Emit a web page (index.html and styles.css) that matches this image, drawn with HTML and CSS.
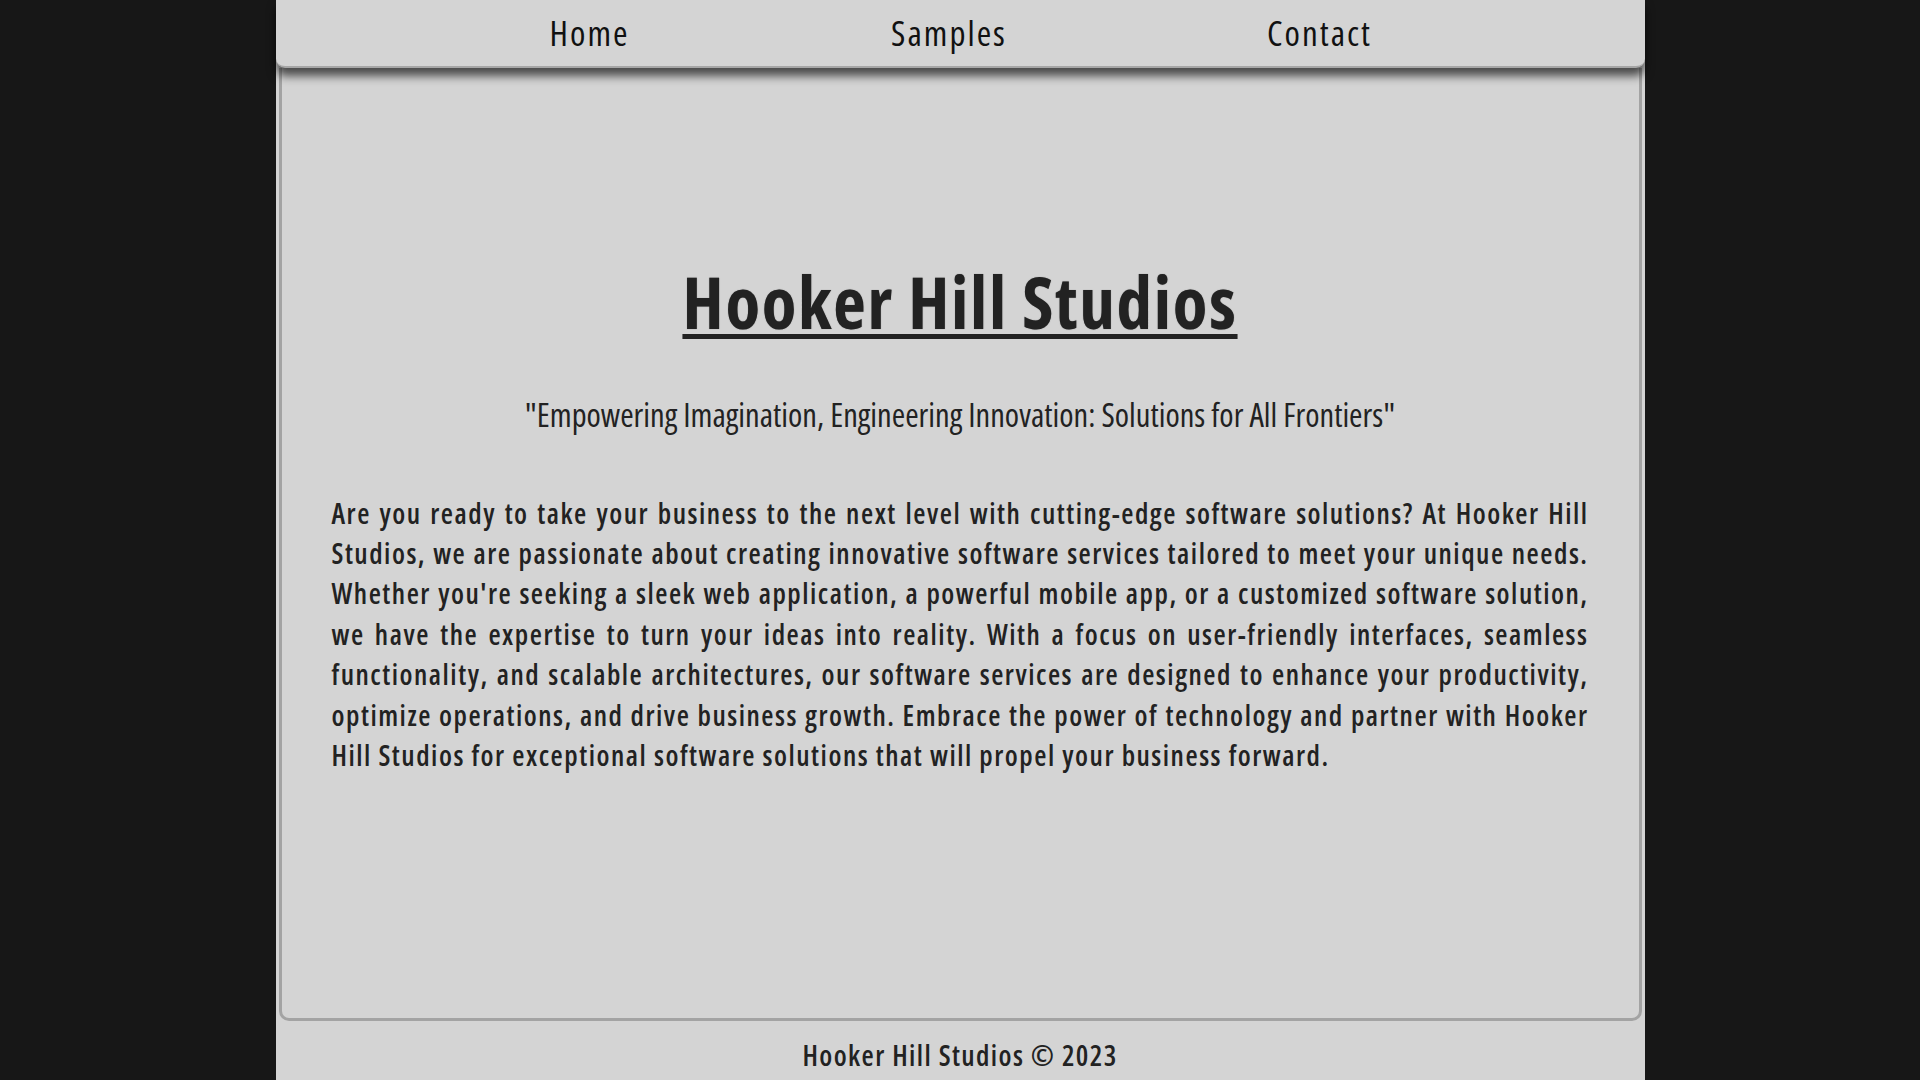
FILE: index.html
```html
<!DOCTYPE html>
<html lang="en">
<head>
<meta charset="utf-8">
<title>Hooker Hill Studios</title>
<link rel="stylesheet" href="styles.css">
</head>
<body>
<div class="page">
  <header class="topbar">
    <nav class="nav">
      <a class="nav-link" href="#">Home</a>
      <a class="nav-link" href="#">Samples</a>
      <a class="nav-link" href="#">Contact</a>
    </nav>
  </header>
  <main class="content">
    <h1 class="title">Hooker Hill Studios</h1>
    <p class="tagline">"Empowering Imagination, Engineering Innovation: Solutions for All Frontiers"</p>
    <p class="intro">Are you ready to take your business to the next level with cutting-edge software solutions? At Hooker Hill Studios, we are passionate about creating innovative software services tailored to meet your unique needs. Whether you're seeking a sleek web application, a powerful mobile app, or a customized software solution, we have the expertise to turn your ideas into reality. With a focus on user-friendly interfaces, seamless functionality, and scalable architectures, our software services are designed to enhance your productivity, optimize operations, and drive business growth. Embrace the power of technology and partner with Hooker Hill Studios for exceptional software solutions that will propel your business forward.</p>
  </main>
  <footer class="footer">Hooker Hill Studios © 2023</footer>
</div>
</body>
</html>
```
FILE: styles.css
```css
html, body {
  margin: 0;
  padding: 0;
}
body {
  background: #171717;
  font-family: "Open Sans", "Noto Sans", sans-serif;
  font-stretch: 75%;
  color: #222;
}
.page {
  width: 1369px;
  margin: 0 auto;
  background: #d4d4d4;
  display: flex;
  flex-direction: column;
}
.topbar {
  position: relative;
  z-index: 2;
  height: 66px;
  background: #d4d4d4;
  border-bottom: 2px solid #a6a6a6;
  border-radius: 0 0 9px 9px;
  box-shadow: 0 8px 10px rgba(0, 0, 0, 0.65);
  display: flex;
  justify-content: center;
  align-items: center;
}
.nav {
  display: grid;
  grid-template-columns: repeat(3, 365px);
  margin-left: -11px;
}
.nav-link {
  text-align: center;
  font-size: 35px;
  letter-spacing: 2px;
  color: #111;
  text-decoration: none;
  line-height: 66px;
}
.nav-link:nth-child(2) {
  padding-right: 11px;
}
.content {
  margin: 0 3px;
  height: 953px;
  box-sizing: border-box;
  border: 3px solid #a3a3a3;
  border-top: none;
  border-radius: 0 0 10px 10px;
  padding: 198px 50px 0;
  display: flex;
  flex-direction: column;
  align-items: center;
}
.title {
  margin: 0;
  font-size: 71px;
  letter-spacing: 1.7px;
  font-weight: 700;
  line-height: 1;
  text-decoration: underline;
  text-decoration-thickness: 5px;
  text-underline-offset: 5px;
  color: #222;
  text-shadow: 0 0 1px #777;
}
.tagline {
  margin: 62px 0 0;
  font-size: 32.5px;
  line-height: 1;
  font-weight: 400;
  color: #222;
}
.intro {
  margin: 61px 0 0;
  font-size: 28px;
  letter-spacing: 1.5px;
  font-weight: 600;
  line-height: 40.4px;
  text-align: justify;
  color: #222;
}
.footer {
  margin-top: 1px;
  height: 66px;
  border-radius: 9px 9px 0 0;
  background: #d4d4d4;
  display: flex;
  align-items: center;
  justify-content: center;
  font-size: 28px;
  letter-spacing: 1.4px;
  font-weight: 600;
  color: #222;
}
```
